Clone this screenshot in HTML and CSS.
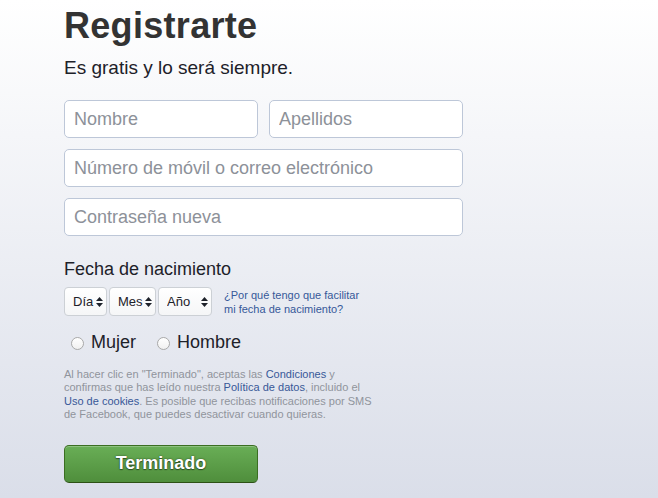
FILE: index.html
```html
<!DOCTYPE html>
<html lang="es">
<head>
<meta charset="utf-8">
<title>Registrarte</title>
<link rel="stylesheet" href="styles.css">
</head>
<body>
<main class="page">
  <h1 class="title">Registrarte</h1>
  <p class="subtitle">Es gratis y lo será siempre.</p>

  <form class="form">
    <div class="fields">
      <div class="name-row">
        <input class="field" type="text" placeholder="Nombre">
        <input class="field" type="text" placeholder="Apellidos">
      </div>
      <input class="field" type="text" placeholder="Número de móvil o correo electrónico">
      <input class="field" type="password" placeholder="Contraseña nueva">
    </div>

    <div class="label">Fecha de nacimiento</div>
    <div class="birthday">
      <div class="selects">
        <div class="sel sel-day">
          <select><option>Día</option></select>
          <svg class="arrows" width="7" height="10" viewBox="0 0 7 10"><path d="M3.5 0 L7 4 L0 4 Z M0 6 L7 6 L3.5 10 Z" fill="#1d2129"/></svg>
        </div>
        <div class="sel sel-month">
          <select><option>Mes</option></select>
          <svg class="arrows" width="7" height="10" viewBox="0 0 7 10"><path d="M3.5 0 L7 4 L0 4 Z M0 6 L7 6 L3.5 10 Z" fill="#1d2129"/></svg>
        </div>
        <div class="sel sel-year">
          <select><option>Año</option></select>
          <svg class="arrows" width="7" height="10" viewBox="0 0 7 10"><path d="M3.5 0 L7 4 L0 4 Z M0 6 L7 6 L3.5 10 Z" fill="#1d2129"/></svg>
        </div>
      </div>
      <a class="why" href="#">¿Por qué tengo que facilitar<br>mi fecha de nacimiento?</a>
    </div>

    <div class="gender">
      <label class="radio"><input type="radio" name="sex"><span>Mujer</span></label>
      <label class="radio"><input type="radio" name="sex"><span>Hombre</span></label>
    </div>

    <p class="legal">Al hacer clic en "Terminado", aceptas las <a href="#">Condiciones</a> y<br>confirmas que has leído nuestra <a href="#">Política de datos</a>, incluido el<br><a href="#">Uso de cookies</a>. Es posible que recibas notificaciones por SMS<br>de Facebook, que puedes desactivar cuando quieras.</p>

    <button class="submit" type="button">Terminado</button>
  </form>
</main>
</body>
</html>
```

FILE: styles.css
```css
html, body {
  margin: 0;
  padding: 0;
}

body {
  width: 658px;
  height: 498px;
  overflow: hidden;
  background: linear-gradient(#ffffff, #dadee9);
  font-family: "Liberation Sans", Arial, sans-serif;
  color: #1d2129;
}

.page {
  padding: 4px 0 0 64px;
}

.title {
  margin: 0;
  font-size: 36px;
  line-height: 44px;
  font-weight: bold;
  color: #333333;
  letter-spacing: 0.3px;
}

.subtitle {
  margin: 8px 0 0;
  font-size: 19px;
  line-height: 24px;
  color: #1d2129;
}

.form {
  margin-top: 20px;
}

.fields {
  width: 399px;
  display: flex;
  flex-direction: column;
  gap: 11px;
}

.name-row {
  display: flex;
  gap: 11px;
}

.field {
  box-sizing: border-box;
  width: 100%;
  height: 38px;
  margin: 0;
  padding: 0 9px;
  border: 1px solid #bdc7d8;
  border-radius: 5px;
  background: #ffffff;
  font-family: "Liberation Sans", Arial, sans-serif;
  font-size: 18px;
  color: #1d2129;
  outline: none;
}

.name-row .field {
  width: 194px;
}

.field::placeholder {
  color: #8d9199;
}

.label {
  margin-top: 22px;
  font-size: 18px;
  line-height: 22px;
  color: #1d2129;
}

.birthday {
  margin-top: 6px;
  display: flex;
  align-items: center;
}

.selects {
  display: flex;
  gap: 2px;
}

.sel {
  position: relative;
  height: 29px;
}

.sel select {
  -webkit-appearance: none;
  appearance: none;
  box-sizing: border-box;
  height: 29px;
  margin: 0;
  padding: 0 0 0 8px;
  border: 1px solid #ccd0d5;
  border-radius: 4px;
  background: linear-gradient(#ffffff, #f5f6f7);
  font-family: "Liberation Sans", Arial, sans-serif;
  font-size: 13px;
  color: #1d2129;
  outline: none;
}

.sel-day select { width: 43px; }
.sel-month select { width: 47px; }
.sel-year select { width: 54px; }

.arrows {
  position: absolute;
  right: 4px;
  top: 10px;
  pointer-events: none;
}

.why {
  margin-left: 12px;
  padding-top: 2px;
  font-size: 11px;
  line-height: 14px;
  color: #365899;
  text-decoration: none;
}

.gender {
  margin-top: 15px;
  display: flex;
  gap: 21px;
  padding-left: 7px;
  font-size: 18px;
  line-height: 22px;
}

.radio {
  display: flex;
  align-items: center;
  gap: 7px;
  color: #1d2129;
}

.radio input {
  -webkit-appearance: none;
  appearance: none;
  box-sizing: border-box;
  width: 13px;
  height: 13px;
  margin: 2px 0 0;
  border: 1px solid #a9a9a9;
  border-radius: 50%;
  background: linear-gradient(#ffffff, #f0f0f0);
}

.legal {
  margin: 15px 0 0;
  font-size: 11px;
  line-height: 13.4px;
  color: #90949c;
  white-space: nowrap;
}

.legal a {
  color: #385898;
  text-decoration: none;
}

.submit {
  display: block;
  box-sizing: border-box;
  width: 194px;
  height: 38px;
  margin-top: 23px;
  padding: 0;
  border: 1px solid #3b6e22;
  border-bottom-color: #2c5115;
  border-radius: 5px;
  background: linear-gradient(#69ae56, #4f8e3c);
  box-shadow: inset 0 1px 0 rgba(255, 255, 255, 0.25);
  font-family: "Liberation Sans", Arial, sans-serif;
  font-size: 18px;
  font-weight: bold;
  color: #ffffff;
  text-shadow: 0 0 2px rgba(0, 0, 0, 0.6), 0 1px 1px rgba(0, 0, 0, 0.4);
}
```
